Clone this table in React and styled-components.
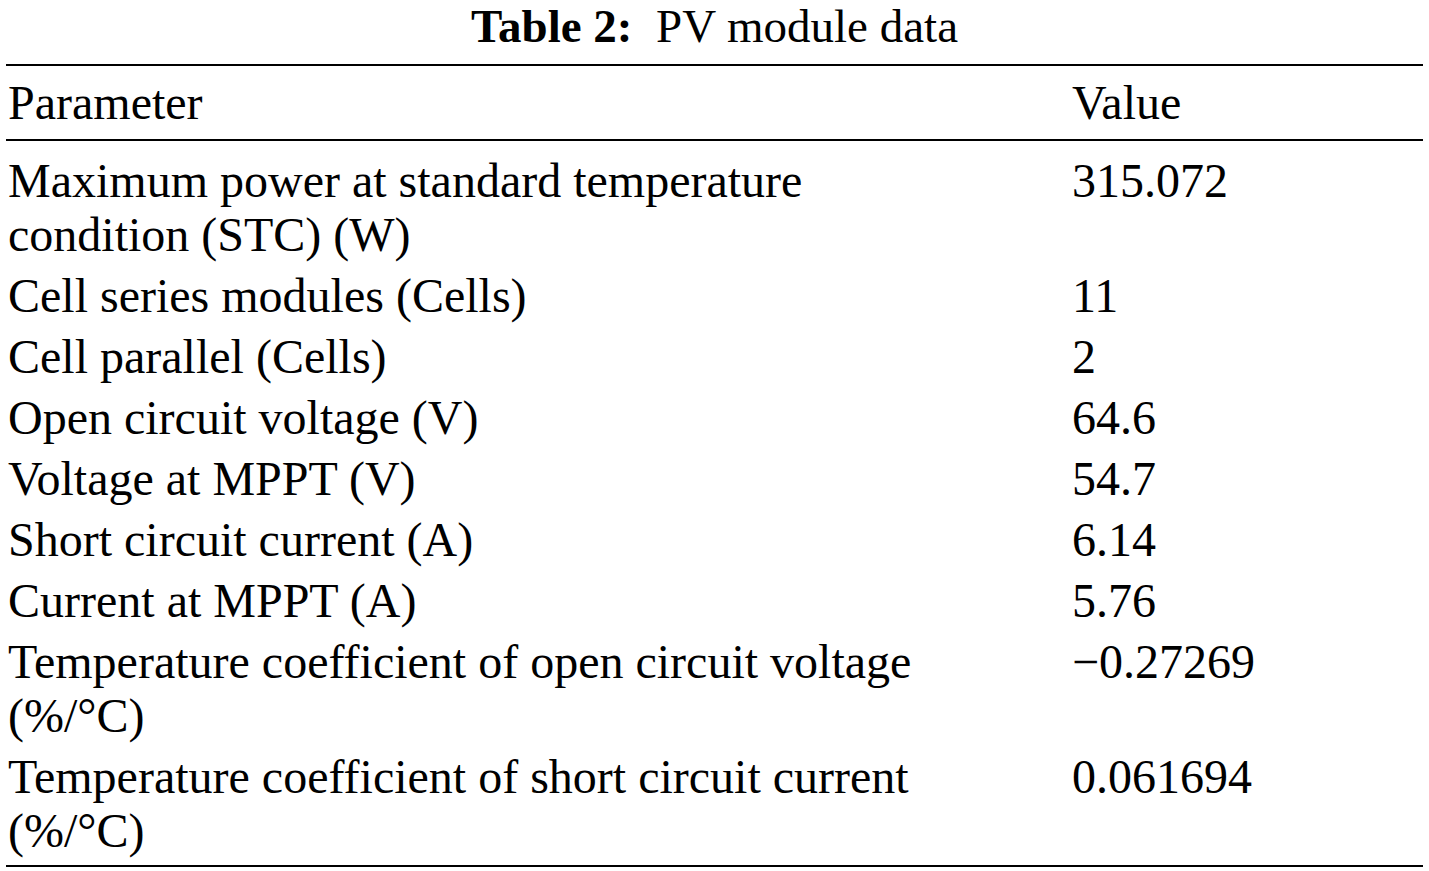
import React from "react";
import styled, { createGlobalStyle } from "styled-components";

const Global = createGlobalStyle`
  html, body { margin: 0; padding: 0; background: #ffffff; }
  body { font-family: "Liberation Serif", "Times New Roman", serif; color: #000; }
`;

const Page = styled.div`
  padding: 0 6px;
  width: 1417px;
`;

const Caption = styled.div`
  text-align: center;
  font-size: 47px;
  line-height: 52px;
  margin-bottom: 12px;
  white-space: nowrap;
`;

const CaptionLabel = styled.span`
  font-weight: bold;
  margin-right: 0.25em;
`;

const Table = styled.table`
  width: 100%;
  border-collapse: collapse;
  font-size: 48px;
  line-height: 54px;
  border-top: 2px solid #000;
  border-bottom: 2px solid #000;
`;

const HeadRow = styled.tr`
  border-bottom: 2px solid #000;
`;

const HeadCell = styled.th`
  font-weight: normal;
  text-align: left;
  padding: 10px 0 9px 2px;
  width: ${(p) => p.$w || "auto"};
`;

const Cell = styled.td`
  vertical-align: top;
  padding: ${(p) => (p.$first ? "13px" : "4px")} 0 ${(p) => (p.$last ? "7px" : "3px")} 2px;
`;

const rows = [
  ["Maximum power at standard temperature\ncondition (STC) (W)", "315.072"],
  ["Cell series modules (Cells)", "11"],
  ["Cell parallel (Cells)", "2"],
  ["Open circuit voltage (V)", "64.6"],
  ["Voltage at MPPT (V)", "54.7"],
  ["Short circuit current (A)", "6.14"],
  ["Current at MPPT (A)", "5.76"],
  ["Temperature coefficient of open circuit voltage\n(%/°C)", "\u22120.27269"],
  ["Temperature coefficient of short circuit current\n(%/°C)", "0.061694"],
];

const Lines = ({ text }) =>
  text.split("\n").map((t, i, a) => (
    <React.Fragment key={i}>
      {t}
      {i < a.length - 1 && <br />}
    </React.Fragment>
  ));

export default function App() {
  return (
    <Page>
      <Global />
      <Caption>
        <CaptionLabel>Table 2:</CaptionLabel> PV module data
      </Caption>
      <Table>
        <thead>
          <HeadRow>
            <HeadCell $w="1062px">Parameter</HeadCell>
            <HeadCell>Value</HeadCell>
          </HeadRow>
        </thead>
        <tbody>
          {rows.map(([p, v], i) => (
            <tr key={i}>
              <Cell $first={i === 0} $last={i === rows.length - 1}>
                <Lines text={p} />
              </Cell>
              <Cell $first={i === 0} $last={i === rows.length - 1}>
                {v}
              </Cell>
            </tr>
          ))}
        </tbody>
      </Table>
    </Page>
  );
}
